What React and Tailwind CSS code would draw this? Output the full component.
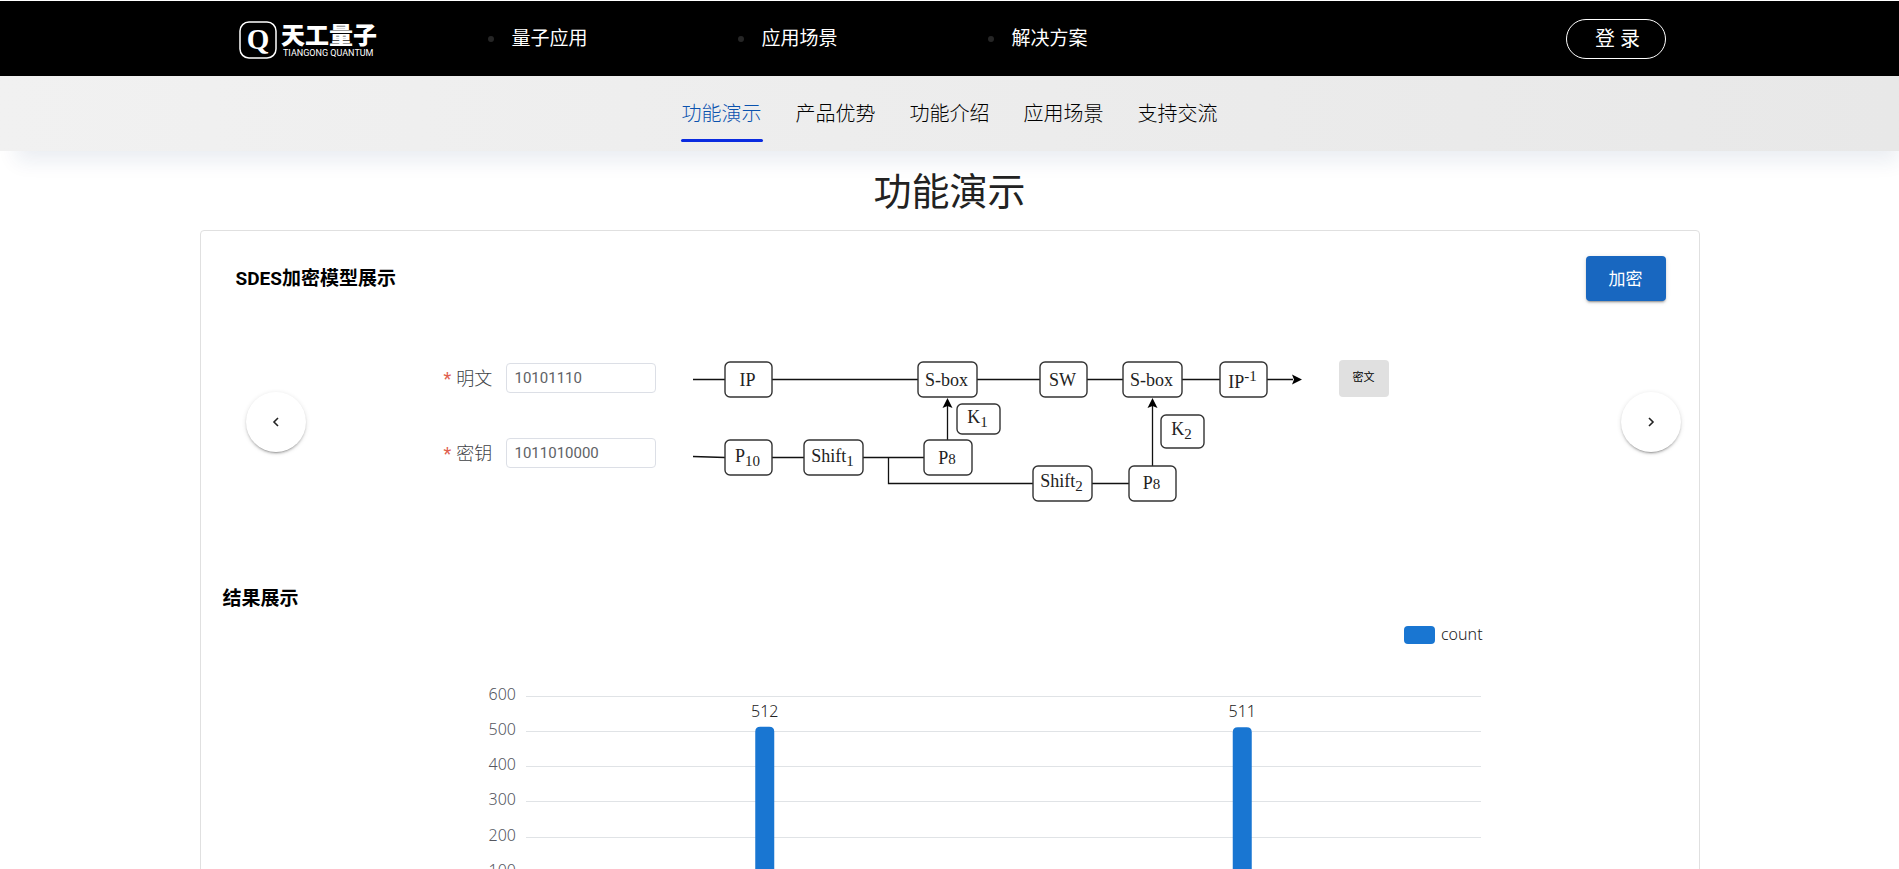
import { useState } from 'react'

const NAV = ['量子应用', '应用场景', '解决方案']
const TABS = ['功能演示', '产品优势', '功能介绍', '应用场景', '支持交流']

const NODES = [
  { x: 32, y: 2, w: 47, h: 35, text: 'IP', ty: 26 },
  { x: 225, y: 2, w: 59, h: 35, text: 'S-box', ty: 26 },
  { x: 347, y: 2, w: 47, h: 35, text: 'SW', ty: 26 },
  { x: 430, y: 2, w: 59, h: 35, text: 'S-box', ty: 26 },
  { x: 527, y: 2, w: 47, h: 35, text: 'IP', ty: 28, small: '-1', dy: -7 },
  { x: 264, y: 44, w: 43, h: 30, text: 'K', ty: 63, small: '1', dy: 4 },
  { x: 468, y: 55, w: 43, h: 33, text: 'K', ty: 75, small: '2', dy: 4 },
  { x: 32, y: 80, w: 47, h: 35, text: 'P', ty: 102, small: '10', dy: 4 },
  { x: 111, y: 80, w: 59, h: 35, text: 'Shift', ty: 102, small: '1', dy: 4 },
  { x: 231, y: 80, w: 48, h: 35, text: 'P', ty: 104, small: '8', dy: 0 },
  { x: 340, y: 106, w: 59, h: 35, text: 'Shift', ty: 127, small: '2', dy: 4 },
  { x: 436, y: 106, w: 47, h: 35, text: 'P', ty: 129, small: '8', dy: 0 },
]

const COUNTS = [512, 511]
const TICKS = [600, 500, 400, 300, 200, 100, 0]

const Logo = () => (
  <svg width="140" height="40" viewBox="0 0 140 40" fill="#fff" role="img" aria-label="天工量子" className="overflow-visible">
    <rect x="1" y="3" width="36" height="36" rx="9" fill="none" stroke="#fff" strokeWidth="1.5" />
    <text x="19" y="30" textAnchor="middle" className="font-['Liberation_Serif'] text-[29px] font-bold">Q</text>
    <text x="42" y="25" className="font-['Noto_Sans_CJK_SC'] text-[24px] font-black">天工量子</text>
    <text x="44" y="37" className="font-['Roboto'] text-[9px]">TIANGONG QUANTUM</text>
  </svg>
)

const Flow = () => (
  <svg width="609" height="144" viewBox="0 0 609 144" className="shrink-0 font-['Liberation_Serif',serif]">
    <g fill="none" stroke="#111" strokeWidth="1.3">
      <path d="M0 19.5H600" />
      <path d="M0 96.5L32 97.5H231" />
      <path d="M195.5 97.5V123.5H436" />
      <path d="M254.5 80V46" />
      <path d="M459.5 106V46" />
    </g>
    <path d="M609 19.5l-10-5l2 5l-2 5z" />
    <path d="M254.5 38l-5 10l5-2l5 2z" />
    <path d="M459.5 38l-5 10l5-2l5 2z" />
    {NODES.map((n, i) => (
      <g key={i}>
        <rect x={n.x} y={n.y} width={n.w} height={n.h} rx="5" fill="#fff" stroke="#333" strokeWidth="1.4" />
        <text x={n.x + n.w / 2 - 1} y={n.ty} textAnchor="middle" fill="#222" className="text-[18px]">
          {n.text}
          {n.small && <tspan dy={n.dy} className="text-[15px]">{n.small}</tspan>}
        </text>
      </g>
    ))}
  </svg>
)

const Chart = () => {
  const left = 116
  const right = 1071
  const yOf = (v) => 295 - v * 0.352
  return (
    <svg width="1080" height="340" viewBox="0 0 1080 340" className="mx-auto block font-['Noto_Sans',sans-serif] text-[16px] font-light">
      <rect x="994" y="14" width="31" height="18" rx="4" fill="#1976d2" />
      <text x="1031" y="28" fill="#222">count</text>
      {TICKS.map((t) => (
        <g key={t}>
          <line x1={left} x2={right} y1={Math.round(yOf(t)) + 0.5} y2={Math.round(yOf(t)) + 0.5} stroke="#e0e3e6" />
          <text x="106" y={Math.round(yOf(t)) + 4} textAnchor="end" fill="#55575f">{t}</text>
        </g>
      ))}
      {COUNTS.map((c, i) => {
        const cx = left + ((right - left) / COUNTS.length) * (i + 0.5)
        return (
          <g key={i}>
            <path d={`M${cx - 9.5} 295V${yOf(c) + 5}q0-5 5-5h9q5 0 5 5V295z`} fill="#1976d2" />
            <text x={cx} y={yOf(c) - 10} textAnchor="middle" fill="#222">{c}</text>
          </g>
        )
      })}
    </svg>
  )
}

const Arrow = ({ d, label }) => (
  <button type="button" aria-label={label} className="mt-8 flex h-15 w-15 shrink-0 items-center justify-center rounded-full bg-white shadow-[0_3px_1px_-2px_rgba(0,0,0,.2),0_2px_2px_rgba(0,0,0,.14),0_1px_5px_rgba(0,0,0,.12)]">
    <svg width="10" height="12" viewBox="0 0 10 12" fill="none" stroke="#222" strokeWidth="1.6"><path d={d} /></svg>
  </button>
)

const Field = ({ id, label, value, onChange }) => (
  <div className="flex items-center">
    <label htmlFor={id} className="w-[62px] pt-0.5 text-[18px] leading-7 font-light text-[#404246]">
      <span className="mr-[5px] font-normal text-[#e0604f]">*</span>{label}
    </label>
    <input id={id} value={value} onChange={(e) => onChange(e.target.value)}
      className="h-[30px] w-[150px] rounded border border-[#dcdfe6] bg-white px-2 text-[15px] text-[#606266] outline-none" />
  </div>
)

export default function App() {
  const [tab, setTab] = useState(0)
  const [plain, setPlain] = useState('10101110')
  const [secret, setSecret] = useState('1011010000')

  return (
    <div className="min-h-screen bg-white pt-px font-['Roboto','Noto_Sans_CJK_SC',sans-serif] text-black">
      {/* Top bar */}
      <header className="bg-black text-white">
        <div className="mx-auto flex h-[75px] max-w-[1500px] items-center pr-[34px] pl-[39px]">
          <a href="#" className="w-[249px] shrink-0"><Logo /></a>
          <nav className="flex-1">
            <ul className="flex">
              {NAV.map((n) => (
                <li key={n} className="flex w-[250px] items-center gap-[18px]">
                  <span className="h-1.5 w-1.5 rounded-full bg-[#262626]"></span>
                  <a href="#" className="text-[19px] leading-7">{n}</a>
                </li>
              ))}
            </ul>
          </nav>
          <button type="button" className="h-10 w-[100px] rounded-full border border-white pl-1 text-[20px]">登 录</button>
        </div>
      </header>

      {/* Section tabs */}
      <nav className="relative flex h-[75px] justify-center gap-8 bg-linear-to-r from-[#f1f1f1] to-[#e8e8e8] shadow-[8px_18px_20px_-8px_rgba(20,60,110,.09)]">
        {TABS.map((t, i) => (
          <a key={t} href="#" onClick={() => setTab(i)}
            className={`relative flex items-center px-px text-[20px] font-light ${tab === i ? 'text-[#0a52ae]' : 'text-black'}`}>
            {t}
            {tab === i && <span className="absolute inset-x-0 bottom-[9px] h-[3px] rounded-full bg-[#0a2be0]"></span>}
          </a>
        ))}
      </nav>

      <h1 className="relative flex h-[79px] items-center justify-center pt-1 text-[38px] text-[#222]">功能演示</h1>

      <main className="mx-auto max-w-[1500px] rounded border border-[#e0e0e0] bg-white">
        <div className="flex items-center justify-between pt-[25px] pr-[33px] pl-[35px]">
          <h3 className="pt-0.5 text-[19px] font-bold">SDES加密模型展示</h3>
          <button type="button" className="h-[45px] w-20 rounded bg-[#1867c0] pt-0.5 text-[17px] text-white shadow-[0_3px_1px_-2px_rgba(0,0,0,.2),0_2px_2px_rgba(0,0,0,.14),0_1px_5px_rgba(0,0,0,.12)]">加密</button>
        </div>

        {/* Encryption flow */}
        <div className="mt-[59px] flex items-start pr-[18px] pl-[45px]">
          <Arrow d="M7 2L3 6l4 4" label="上一个" />
          <div className="flex flex-1 items-start gap-[37px] pl-[138px]">
            <form className="flex flex-col gap-[45px] pt-[3px]">
              <Field id="plain" label="明文" value={plain} onChange={setPlain} />
              <Field id="secret" label="密钥" value={secret} onChange={setSecret} />
            </form>
            <Flow />
            <button type="button" className="h-[37px] w-[50px] shrink-0 rounded bg-[#e0e0e0] text-[11px]">密文</button>
          </div>
          <Arrow d="M3 2l4 4l-4 4" label="下一个" />
        </div>

        <h3 className="mt-20 pt-0.5 pl-[22px] text-[19px] leading-[26px] font-bold">结果展示</h3>
        <Chart />
      </main>
    </div>
  )
}
